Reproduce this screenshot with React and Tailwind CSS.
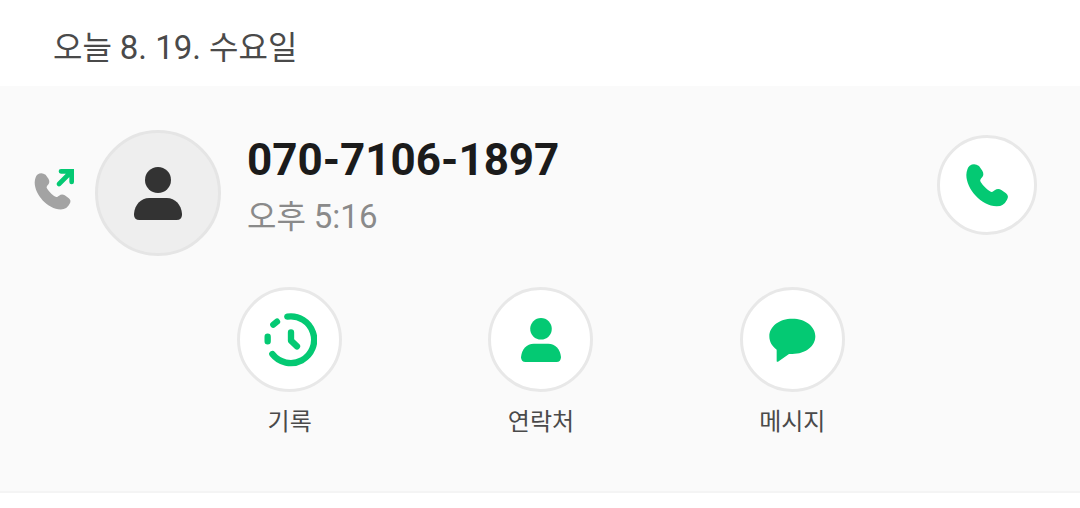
const PHONE_PATH =
  'M119 122 Q133 113 147 123 L157 137 Q163 148 157 156 L152 162 Q149 166 152 171 Q158 181 168 190 Q179 200 184 201 Q188 201 191 198 L194 196 Q204 189 214 195 L228 205 Q238 213 231 224 Q222 243 200 244 C154 243 109 192 109 150 Q110 130 119 122 Z'

function PhoneIcon({ className }) {
  return (
    <svg viewBox="99 108 144 144" className={className} fill="currentColor" aria-hidden="true">
      <path d={PHONE_PATH} />
    </svg>
  )
}

function OutgoingCallIcon({ className }) {
  return (
    <svg viewBox="42 144 123 126" className={className} fill="none" aria-hidden="true">
      <path d={PHONE_PATH} transform="translate(-49.7 58.4) scale(0.86)" fill="#a3a3a3" />
      <path d="M117 192 L153 156 M123 154 H155 V186" stroke="#04c973" strokeWidth="14" strokeLinecap="round" />
    </svg>
  )
}

function PersonIcon({ className }) {
  return (
    <svg viewBox="342 138 144 159" className={className} fill="currentColor" aria-hidden="true">
      <circle cx="414" cy="177" r="39" />
      <path d="M342 278 C344 252 362 231 388 231 H440 C466 231 484 252 486 278 Q487 297 470 297 H358 Q341 297 342 278 Z" />
    </svg>
  )
}

function HistoryIcon({ className }) {
  return (
    <svg
      viewBox="99 98 162 162"
      className={className}
      fill="none"
      stroke="currentColor"
      strokeWidth="19"
      strokeLinecap="round"
      strokeLinejoin="round"
      aria-hidden="true"
    >
      <path d="M172 109 A70 70 0 1 1 127 221" />
      <path d="M113 169 V183 M130 133 L141 124" />
      <path d="M183 156 V181 L201 198" />
    </svg>
  )
}

function MessageIcon({ className }) {
  return (
    <svg viewBox="115 107 144 144" className={className} fill="currentColor" aria-hidden="true">
      <path d="M188 115 C227 115 257 138 257 168 C257 198 228 221 188 221 Q182 221 178 221 L145 244 Q141 246 141 241 V208 C127 198 119 184 119 168 C119 138 149 115 188 115 Z" />
    </svg>
  )
}

const actions = [
  { label: '기록', Icon: HistoryIcon, size: 'size-[54px]' },
  { label: '연락처', Icon: PersonIcon, size: 'w-10 h-11' },
  { label: '메시지', Icon: MessageIcon, size: 'size-12' },
]

export default function App() {
  return (
    <main className="min-h-screen bg-white font-['Roboto','Noto_Sans_CJK_KR',sans-serif]">
      <h2 className="px-[53px] pt-[26px] pb-4 text-[32px] leading-[44px] text-[#4a4a4a]">
        오늘 <span className="text-[33px]">8. 19.</span> 수요일
      </h2>

      <section className="bg-[#fafafa] border-b-2 border-[#f4f4f4] pt-11 pb-[53px]">
        <div className="flex items-start pl-[34px] pr-[43px]">
          <OutgoingCallIcon className="w-[41px] h-[42px] mt-[38px] mr-5 shrink-0" />
          <div className="size-[126px] shrink-0 rounded-full bg-[#eeeeee] border-3 border-[#e5e5e5] flex items-center justify-center text-[#333333]">
            <PersonIcon className="w-12 h-[53px]" />
          </div>
          <div className="flex-1 min-w-0 ml-[26px] pt-1">
            <p className="text-[44px] leading-[52px] font-bold text-[#1b1b1b]">070-7106-1897</p>
            <p className="mt-[9px] text-[32px] leading-[44px] text-[#8a8a8a]">
              오후 <span className="text-[33px]">5:16</span>
            </p>
          </div>
          <button
            type="button"
            aria-label="전화 걸기"
            className="size-[100px] mt-[5px] shrink-0 rounded-full bg-white border-3 border-[#e8e8e8] flex items-center justify-center text-[#04c973]"
          >
            <PhoneIcon className="size-12" />
          </button>
        </div>

        <div className="grid grid-cols-3 mt-[31px] pl-[164px] pr-[162px]">
          {actions.map(({ label, Icon, size }) => (
            <button key={label} type="button" className="flex flex-col items-center gap-[14px]">
              <span className="size-[105px] rounded-full bg-white border-3 border-[#e8e8e8] flex items-center justify-center text-[#04c973]">
                <Icon className={size} />
              </span>
              <span className="text-2xl leading-8 text-[#4a4a4a]">{label}</span>
            </button>
          ))}
        </div>
      </section>
    </main>
  )
}
